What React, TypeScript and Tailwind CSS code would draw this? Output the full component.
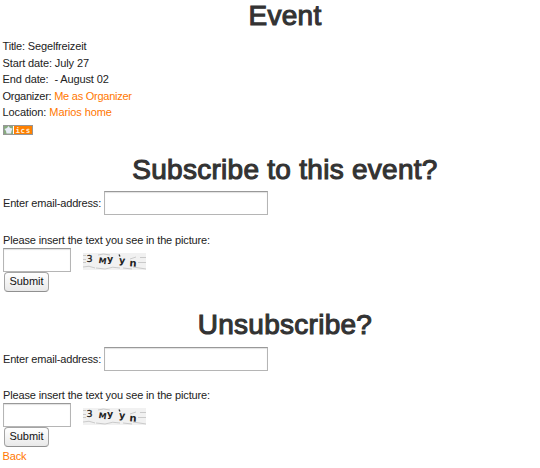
import React from "react";

function Heading({ children }: { children: React.ReactNode }) {
  return (
    <h1 className="text-center text-[28px] leading-[32px] tracking-[0.27px] text-[#333333] [-webkit-text-stroke:1.1px_#333333]">
      {children}
    </h1>
  );
}

function Captcha() {
  return (
    <svg width="63" height="17" viewBox="0 0 63 17" className="ml-3 mt-[3px] shrink-0" fontFamily="'DejaVu Sans', sans-serif">
      <rect width="63" height="17" fill="#f1f1f1" />
      <g stroke="#c0c0c0" strokeWidth="0.8" fill="none">
        <path d="M0 2.5H3M0 6.5H3M0 9.5H3M57 4.5H63M55 9.5H63M15 2Q20 0 27 2M0 14Q6 12 12 15M22 16Q30 13 37 15M40 15L49 16M47 6L53 4M50 14L63 16M13 15L22 16" />
      </g>
      <g fill="#222222">
        <text x="3.5" y="9" fontSize="9.5" stroke="#222222" strokeWidth="0.3">3</text>
        <text x="15.5" y="10.5" fontWeight="bold" fontSize="8" transform="rotate(9 19 8)">M</text>
        <text x="24" y="9" fontWeight="bold" fontSize="9.5">y</text>
        <text x="36" y="10.5" fontWeight="bold" fontSize="9.5" transform="rotate(6 39 8)">y</text>
        <text x="46.5" y="13.5" fontWeight="bold" fontSize="10" transform="rotate(4 50 11)">n</text>
      </g>
      <path d="M36 1.5L37 3.5" stroke="#333333" strokeWidth="1.2" />
    </svg>
  );
}

const field =
  "block h-6 border border-[#b5b5b5] border-t-[#999999] bg-white px-1 shadow-[inset_0_1px_1px_#e2e2e2] outline-none";

function EventForm({ gap }: { gap: string }) {
  return (
    <form onSubmit={(e) => e.preventDefault()}>
      <label className="flex h-6 items-center">
        <span className="w-[101px] shrink-0 whitespace-nowrap tracking-[-0.17px]">Enter email-address:</span>
        <input type="text" className={field + " w-[164px]"} />
      </label>
      <p className={gap + " h-4 leading-4 tracking-[-0.14px]"}>Please insert the text you see in the picture:</p>
      <div className="flex h-6 items-center">
        <input type="text" aria-label="Captcha text" className={field + " w-[68px]"} />
        <Captcha />
      </div>
      <button
        type="submit"
        className="ml-px flex h-5 w-[45px] items-center justify-center rounded-[4px] border border-[#a4a4a4] border-b-[#909090] bg-linear-to-b from-white to-[#e9e9e9] pb-px text-[11px] tracking-[0px] text-[#111111]"
      >
        Submit
      </button>
    </form>
  );
}

export default function App() {
  return (
    <main className="h-[468px] w-[540px] overflow-hidden bg-white pl-[2.5px] font-['Liberation_Sans',Arial,sans-serif] text-[11px] leading-[16.5px] tracking-[-0.12px] text-[#222222]">
      <div className="-ml-[2.5px] w-[570px]">
        <Heading>Event</Heading>
      </div>
      <div className="mt-[6px]">
        <p className="tracking-[-0.16px]">Title: Segelfreizeit</p>
        <p className="tracking-[-0.12px]">Start date: July 27</p>
        <p className="whitespace-pre tracking-[-0.12px]">End date:  - August 02</p>
        <p className="tracking-[-0.25px]">Organizer: <a href="#" className="text-[#ff7700]">Me as Organizer</a></p>
        <p className="tracking-[-0.09px]">Location: <a href="#" className="text-[#ff7700]">Marios home</a></p>
      </div>
      <svg width="30" height="10" viewBox="0 0 30 10" className="ml-[0.5px] mt-[4.5px] block" fontFamily="'DejaVu Sans Mono', monospace">
        <rect width="30" height="10" fill="#969696" />
        <rect x="1" y="1" width="28" height="8" fill="#ffffff" />
        <rect x="1" y="1" width="9" height="8" fill="#88aa80" />
        <path d="M5.5 1L7 3L9.5 3.5L8.5 6L8 8.5H3.5L3 6L1.5 4L4 3Z" fill="#e8edf7" />
        <rect x="11" y="1" width="18" height="8" fill="#ff8000" />
        <text x="12.5" y="7.7" fontSize="7.5" fontWeight="bold" letterSpacing="0.6" fill="#fff0dc">ics</text>
      </svg>
      <div className="-ml-[2.5px] mt-[19px] w-[570px]">
        <Heading>Subscribe to this event?</Heading>
      </div>
      <div className="ml-[0.5px] mt-[5px]">
        <EventForm gap="mt-[17px]" />
      </div>
      <div className="-ml-[2.5px] mt-[17px] w-[570px]">
        <Heading>Unsubscribe?</Heading>
      </div>
      <div className="ml-[0.5px] mt-[6px]">
        <EventForm gap="mt-[16px]" />
      </div>
      <a href="#" className="mt-px block text-[#ff7700]">Back</a>
    </main>
  );
}
